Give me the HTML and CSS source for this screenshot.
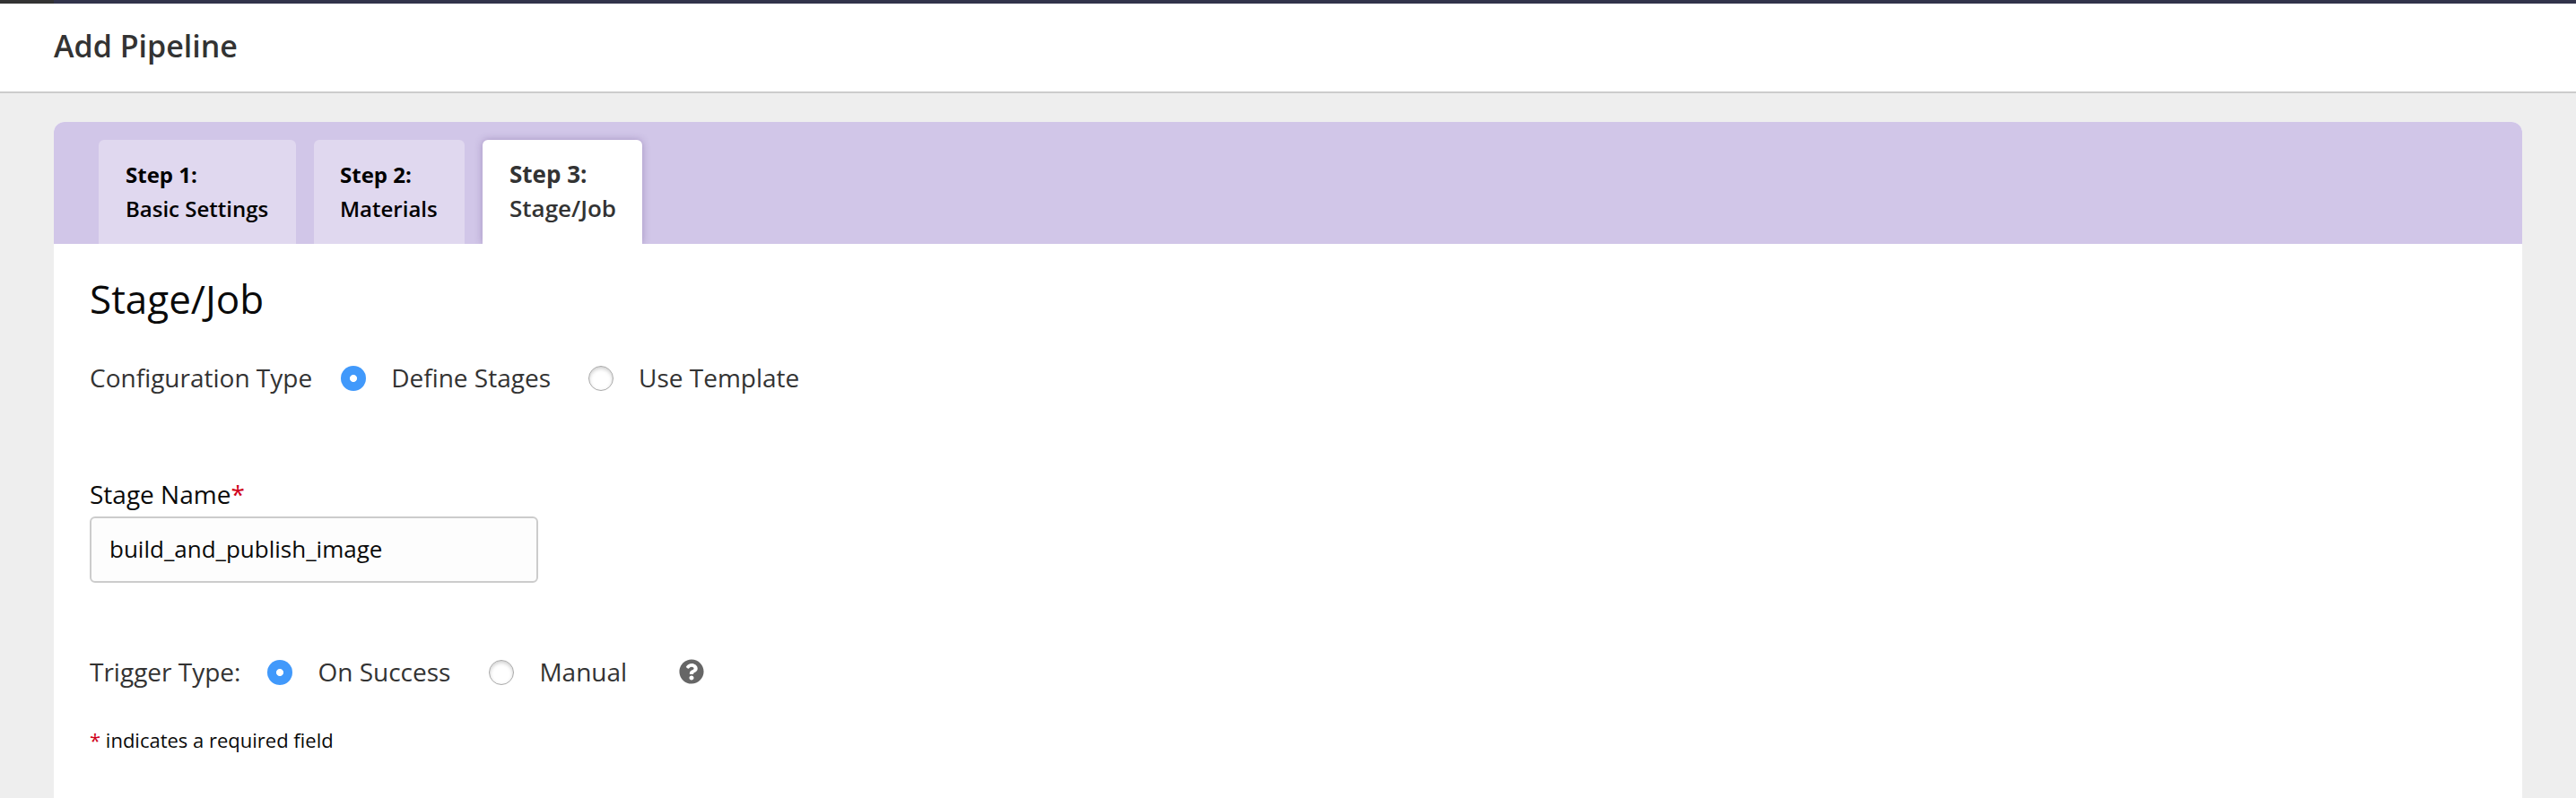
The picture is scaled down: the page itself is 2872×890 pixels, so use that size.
FILE: index.html
```html
<!DOCTYPE html>
<html lang="en">
<head>
<meta charset="utf-8">
<title>Add Pipeline</title>
<link rel="stylesheet" href="styles.css">
</head>
<body>
<div class="topbar"><div class="topbar-logo"></div></div>
<header class="page-header"><h1 class="page-title">Add Pipeline</h1></header>
<main class="wizard">
  <nav class="tabs">
    <div class="tab tab-settings"><b>Step 1:</b><span>Basic Settings</span></div>
    <div class="tab tab-materials"><b>Step 2:</b><span>Materials</span></div>
    <div class="tab tab-active"><b>Step 3:</b><span>Stage/Job</span></div>
  </nav>
  <section class="panel">
    <h2 class="heading">Stage/Job</h2>
    <div class="radio-row config-row">
      <span class="row-label">Configuration Type</span>
      <label class="option"><input class="radio" type="radio" name="config" checked><span class="option-text">Define Stages</span></label>
      <label class="option"><input class="radio" type="radio" name="config"><span class="option-text">Use Template</span></label>
    </div>
    <label class="field-label" for="stage">Stage Name<span class="required">*</span></label>
    <input class="text-input" id="stage" type="text" value="build_and_publish_image">
    <div class="radio-row trigger-row">
      <span class="row-label">Trigger Type:</span>
      <label class="option"><input class="radio" type="radio" name="trigger" checked><span class="option-text">On Success</span></label>
      <label class="option"><input class="radio" type="radio" name="trigger"><span class="option-text">Manual</span></label>
      <svg class="help" viewBox="0 0 512 512"><path fill="#666" d="M504 256c0 136.997-111.043 248-248 248S8 392.997 8 256C8 119.083 119.043 8 256 8s248 111.083 248 248zM262.655 90c-54.497 0-89.255 22.957-116.549 63.758-3.536 5.286-2.353 12.415 2.715 16.258l34.699 26.31c5.205 3.947 12.621 3.008 16.665-2.122 17.864-22.658 30.113-35.797 57.303-35.797 20.429 0 45.698 13.148 45.698 32.958 0 14.976-12.363 22.667-32.534 33.976C247.128 238.528 216 254.941 216 296v4c0 6.627 5.373 12 12 12h56c6.627 0 12-5.373 12-12v-1.333c0-28.462 83.186-29.647 83.186-106.667 0-58.002-60.165-102-116.531-102zM256 338c-25.365 0-46 20.635-46 46 0 25.364 20.635 46 46 46s46-20.636 46-46c0-25.365-20.635-46-46-46z"/></svg>
    </div>
    <p class="note"><span class="required">*</span> indicates a required field</p>
  </section>
</main>
</body>
</html>
```
FILE: styles.css
```css
* { box-sizing: border-box; }
body {
  margin: 0;
  height: 890px;
  overflow: hidden;
  display: flex;
  flex-direction: column;
  background: #eee;
  color: #0a0a0a;
  font-family: "Open Sans", sans-serif;
}
.topbar { height: 4px; flex: none; background: #32344b; }
.topbar-logo { width: 60px; height: 4px; background: #333; }
.page-header {
  flex: none;
  height: 100px;
  padding: 0 60px;
  background: #fff;
  border-bottom: 2px solid #ccc;
}
.page-title {
  margin: 0;
  font-size: 34px;
  line-height: 94px;
  font-weight: 600;
  color: #333;
}
.wizard {
  flex: 1;
  display: flex;
  flex-direction: column;
  margin: 32px 60px 0;
  border-radius: 12px 12px 0 0;
  overflow: hidden;
  background: #fff;
}
.tabs {
  flex: none;
  display: flex;
  gap: 20px;
  height: 136px;
  padding: 20px 50px 0;
  background: #d1c6e8;
  overflow: hidden;
}
.tab {
  flex: none;
  display: flex;
  flex-direction: column;
  padding: 20px 0 0 30px;
  border-radius: 6px 6px 0 0;
  background: #e0d8ef;
  color: #000;
  font-size: 24px;
  line-height: 38px;
  font-weight: 600;
  white-space: nowrap;
}
.tab b { font-weight: 700; }
.tab-settings { width: 220px; }
.tab-materials { width: 168px; padding-left: 29px; }
.tab-active {
  width: 178px;
  padding-top: 19px;
  background: #fff;
  color: #333;
  font-size: 26px;
  box-shadow: 0 0 8px rgba(80, 50, 120, 0.35);
}
.panel { padding: 31px 40px 0; }
.heading { margin: 0; font-size: 44px; line-height: 60px; font-weight: 400; }
.radio-row {
  display: flex;
  align-items: center;
  height: 42px;
  font-size: 28px;
  line-height: 40px;
  color: #333;
}
.config-row { margin-top: 38px; }
.trigger-row { margin-top: 79px; }
.row-label { margin-right: 32px; padding-bottom: 2px; }
.trigger-row .row-label { margin-right: 30px; }
.option { display: flex; align-items: center; gap: 28px; margin-right: 42px; }
.trigger-row .option { margin-right: 43px; }
.option-text { padding-bottom: 2px; }
.radio {
  appearance: none;
  flex: none;
  width: 28px;
  height: 28px;
  margin: 0;
  border: 1px solid #aaa;
  border-radius: 50%;
  background: #fff;
  box-shadow: inset 0 2px 4px rgba(0, 0, 0, 0.2);
}
.radio:checked {
  border: 0;
  background: radial-gradient(circle, #fff 3.6px, #4199fb 4.4px);
  box-shadow: none;
}
.help { width: 28px; height: 28px; margin: -2px 0 0 15px; }
.field-label {
  display: block;
  margin-top: 88px;
  font-size: 28px;
  line-height: 40px;
}
.required { color: #d0021b; }
.text-input {
  display: block;
  width: 500px;
  height: 74px;
  margin-top: 5px;
  padding: 0 20px 2px;
  border: 2px solid #ccc;
  border-radius: 6px;
  background: #fdfdfd;
  color: #0a0a0a;
  font-family: "Open Sans", sans-serif;
  font-size: 26px;
}
.note { margin: 36px 0 0; font-size: 22px; line-height: 36px; }
```
